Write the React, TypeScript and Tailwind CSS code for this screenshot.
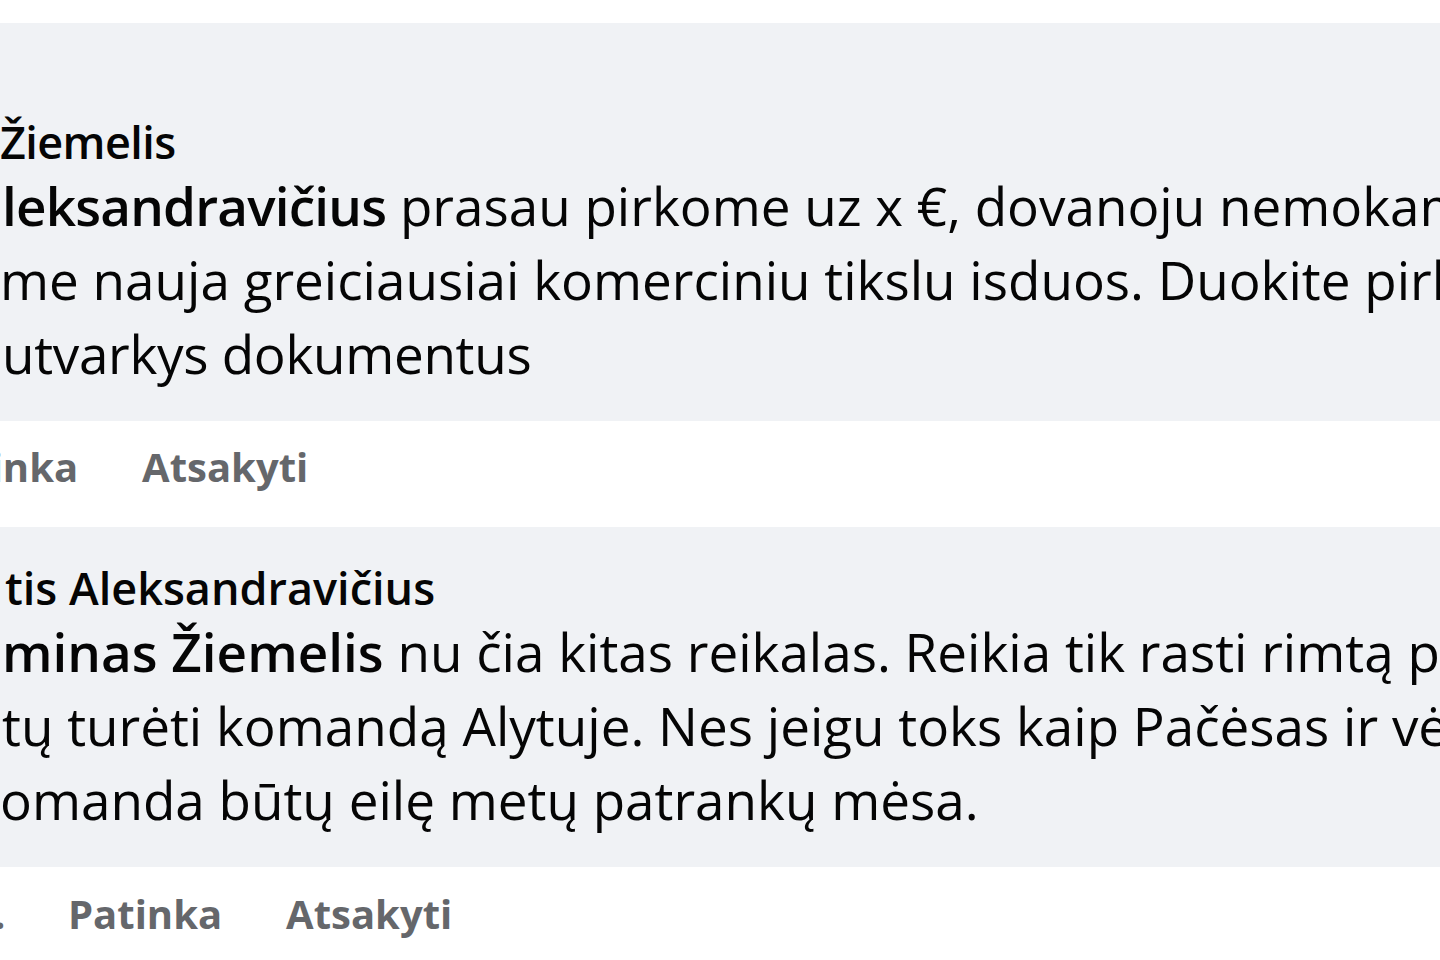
import React from "react";

const font = { fontFamily: '"Open Sans", "Noto Sans", sans-serif' };

function Line({ children, className = "" }: { children: React.ReactNode; className?: string }) {
  return <div className={"whitespace-nowrap h-[74px] leading-[74px] text-[53px] text-[#050505] " + className}>{children}</div>;
}

export default function App() {
  return (
    <div className="w-[1440px] h-[960px] overflow-hidden bg-white" style={font}>
      <div className="h-[23px]" />
      {/* Comment 1 */}
      <div className="bg-[#f0f2f5] pt-[91px] pb-[30px]">
        <div className="whitespace-nowrap h-[55px] leading-[55px] text-[45px] font-semibold text-[#050505] tracking-[-0.6px]">Žiemelis</div>
        <Line className="pl-[2px]">
          <span className="font-semibold tracking-[-0.8px]">leksandravičius</span> prasau pirkome uz x €, dovanoju nemokamai
        </Line>
        <Line>me nauja greiciausiai komerciniu tikslu isduos. Duokite pirkti</Line>
        <Line className="pl-[2px] tracking-[-0.3px]">utvarkys dokumentus</Line>
      </div>
      <div className="flex items-center gap-[64px] h-[60px] leading-[60px] mt-[16px] ml-[-76px] text-[40px] font-bold text-[#65676b] whitespace-nowrap">
        <span>Patinka</span>
        <span>Atsakyti</span>
      </div>
      <div className="h-[30px]" />
      {/* Comment 2 */}
      <div className="bg-[#f0f2f5] pt-[33px] pb-[30px]">
        <div className="whitespace-nowrap h-[55px] leading-[55px] text-[45px] font-semibold text-[#050505] pl-[5px]">tis Aleksandravičius</div>
        <Line className="pl-[2px]">
          <span className="font-semibold">minas Žiemelis</span> nu čia kitas reikalas. Reikia tik rasti rimtą pinigų
        </Line>
        <Line className="pl-[2px]">tų turėti komandą Alytuje. Nes jeigu toks kaip Pačėsas ir vėl</Line>
        <Line>omanda būtų eilę metų patrankų mėsa.</Line>
      </div>
      <div className="flex items-center gap-[64px] h-[60px] leading-[60px] mt-[17px] ml-[-6px] text-[40px] font-bold text-[#65676b] whitespace-nowrap">
        <span className="w-[10px] overflow-hidden text-right">.</span>
        <span>Patinka</span>
        <span>Atsakyti</span>
      </div>
    </div>
  );
}
